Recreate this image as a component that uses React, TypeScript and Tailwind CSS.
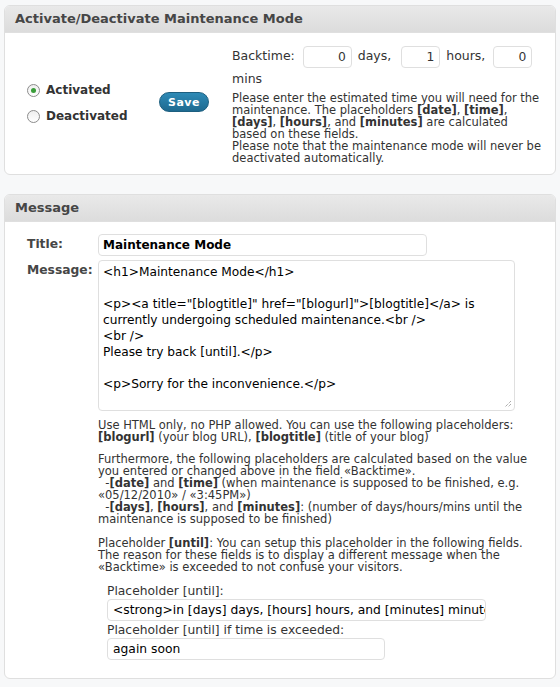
import React from 'react';

const font = { fontFamily: '"DejaVu Sans", Verdana, sans-serif' };

function Box({ title, children }: { title: string; children: React.ReactNode }) {
  return (
    <div className="mx-[4px] rounded-[6px] border border-[#dfdfdf] bg-white overflow-hidden">
      <div className="h-[27px] flex items-center px-[10px] bg-gradient-to-b from-[#e9e9e9] to-[#dcdcdc] border-b border-[#dfdfdf]">
        <h3 className="text-[13px] font-bold text-[#464646]">{title}</h3>
      </div>
      {children}
    </div>
  );
}

function Radio({ checked, label }: { checked?: boolean; label: string }) {
  return (
    <label className="flex items-center gap-[6px]">
      <span className="w-[13px] h-[13px] rounded-full border border-[#8c8c8c] bg-gradient-to-b from-[#eeeeee] to-white flex items-center justify-center">
        {checked && <span className="w-[5px] h-[5px] rounded-full bg-[#3a9d3a]" />}
      </span>
      <span className="text-[12px] font-bold text-[#333]">{label}</span>
    </label>
  );
}

function SmallInput({ value, w }: { value: string; w: string }) {
  return (
    <span className={`inline-block align-middle h-[22px] leading-[20px] px-[5px] text-right rounded-[4px] border border-[#dfdfdf] bg-white text-[12.3px] text-[#333] ${w}`}>
      {value}
    </span>
  );
}

export default function App() {
  return (
    <div style={font} className="min-h-[687px] bg-[#f7f8f9] pt-[5px] text-[#333]">
      <Box title="Activate/Deactivate Maintenance Mode">
        <div className="flex pb-[10px]">
          <div className="w-[127px] pl-[22px] flex flex-col justify-center gap-[8px] pt-[10px]">
            <Radio checked label="Activated" />
            <Radio label="Deactivated" />
          </div>
          <div className="w-[100px] flex items-center pl-[27px] pt-[8px]">
            <span className="rounded-full bg-gradient-to-b from-[#2e8ab6] to-[#1e6a90] text-white text-[11px] font-bold tracking-[0.5px] px-[8px] h-[20px] leading-[20px] border border-[#1d5f80]">
              Save
            </span>
          </div>
          <div className="w-[312px] pt-[12px]">
            <div className="text-[12.5px] leading-[22px]">
              Backtime:{' '}
              <span className="ml-[4px]"><SmallInput value="0" w="w-[49px]" /></span>
              <span className="ml-[2px]"> days,</span>{' '}
              <span className="ml-[6px]"><SmallInput value="1" w="w-[39px]" /></span>
              <span className="ml-[2px]"> hours,</span>{' '}
              <span className="ml-[4px]"><SmallInput value="0" w="w-[39px]" /></span>
              <br />
              mins
            </div>
            <p className="text-[11.5px] leading-[12px] mt-[2px]">
              Please enter the estimated time you will need for the maintenance. The placeholders <b>[date]</b>, <b>[time]</b>, <b>[days]</b>, <b>[hours]</b>, and <b>[minutes]</b> are calculated based on these fields.
              <br />
              Please note that the maintenance mode will never be deactivated automatically.
            </p>
          </div>
        </div>
      </Box>

      <div className="h-[19px]" />

      <Box title="Message">
        <div className="pl-[22px] pt-[12px] pb-[18px]">
          <div className="flex items-center">
            <div className="w-[71px] text-[12.3px] font-bold text-[#464646]">Title:</div>
            <div className="w-[329px] h-[22px] rounded-[4px] border border-[#dfdfdf] px-[4px] leading-[20px] text-[12px] font-bold text-black">
              Maintenance Mode
            </div>
          </div>
          <div className="flex mt-[4px]">
            <div className="w-[71px] pt-[1px] text-[12.3px] font-bold text-[#464646]">Message:</div>
            <div className="flex-1">
              <div className="relative w-[417px] h-[151px] rounded-[4px] border border-[#dfdfdf] px-[4px] pt-[3px] text-[12.2px] leading-[16px] text-black">
                &lt;h1&gt;Maintenance Mode&lt;/h1&gt;
                <br />
                <br />
                &lt;p&gt;&lt;a title="[blogtitle]" href="[blogurl]"&gt;[blogtitle]&lt;/a&gt; is currently undergoing scheduled maintenance.&lt;br /&gt;
                <br />
                &lt;br /&gt;
                <br />
                Please try back [until].&lt;/p&gt;
                <br />
                <br />
                &lt;p&gt;Sorry for the inconvenience.&lt;/p&gt;
                <svg className="absolute right-[2px] bottom-[2px]" width="8" height="8" viewBox="0 0 8 8">
                  <path d="M7 1 L1 7 M7 4 L4 7" stroke="#8a8a8a" strokeWidth="1" strokeDasharray="1 1" />
                </svg>
              </div>
              <div className="w-[436px] text-[11.5px] leading-[12px] mt-[8px]">
                <p>
                  Use HTML only, no PHP allowed. You can use the following placeholders: <b>[blogurl]</b> (your blog URL), <b>[blogtitle]</b> (title of your blog)
                </p>
                <p className="mt-[10px]">
                  Furthermore, the following placeholders are calculated based on the value you entered or changed above in the field «Backtime».
                  <br />
                  &nbsp;&nbsp;-<b>[date]</b> and <b>[time]</b> (when maintenance is supposed to be finished, e.g. «05/12/2010» / «3:45PM»)
                  <br />
                  &nbsp;&nbsp;-<b>[days]</b>, <b>[hours]</b>, and <b>[minutes]</b>: (number of days/hours/mins until the maintenance is supposed to be finished)
                </p>
                <p className="mt-[12px]">
                  Placeholder <b>[until]</b>: You can setup this placeholder in the following fields. The reason for these fields is to display a different message when the «Backtime» is exceeded to not confuse your visitors.
                </p>
              </div>
              <div className="pl-[9px] mt-[10px] text-[12.3px]">
                <div className="leading-[16px]">Placeholder [until]:</div>
                <div className="w-[379px] h-[22px] rounded-[4px] border border-[#dfdfdf] px-[5px] leading-[20px] text-black whitespace-nowrap overflow-hidden">
                  &lt;strong&gt;in [days] days, [hours] hours, and [minutes] minutes&lt;/strong&gt;
                </div>
                <div className="leading-[16px] mt-[1px]">Placeholder [until] if time is exceeded:</div>
                <div className="w-[278px] h-[22px] rounded-[4px] border border-[#dfdfdf] px-[5px] leading-[20px] text-black">
                  again soon
                </div>
              </div>
            </div>
          </div>
        </div>
      </Box>
    </div>
  );
}
